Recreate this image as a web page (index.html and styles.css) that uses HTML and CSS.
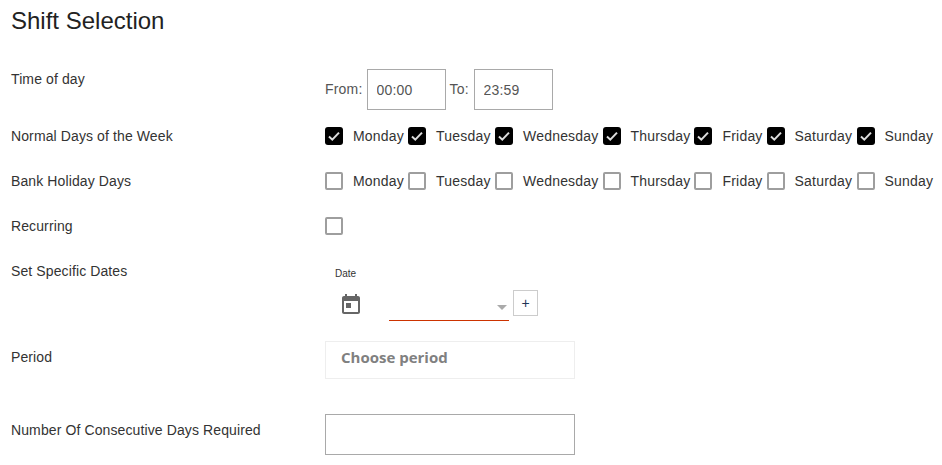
FILE: index.html
```html
<!DOCTYPE html>
<html lang="en">
<head>
    <meta charset="UTF-8">
    <title>Shift Selection</title>
    <link rel="stylesheet" href="styles.css">
</head>
<body>
    <div class="container">
        <h1>Shift Selection</h1>

        <div class="row timeRow">
            <div class="rowLabel">Time of day</div>
            <div class="rowControl">
                <span class="timeLabel">From:</span>
                <input class="textInput timeInput" type="text" value="00:00">
                <span class="timeLabel toLabel">To:</span>
                <input class="textInput timeInput" type="text" value="23:59">
            </div>
        </div>

        <div class="row dayRow">
            <div class="rowLabel">Normal Days of the Week</div>
            <div class="rowControl">
                <label class="day"><span class="box checked"><svg viewBox="0 0 18 18"><path d="M4 9.5l3.3 3.2L14 5.6"/></svg></span><span class="dayName">Monday</span></label>
                <label class="day"><span class="box checked"><svg viewBox="0 0 18 18"><path d="M4 9.5l3.3 3.2L14 5.6"/></svg></span><span class="dayName">Tuesday</span></label>
                <label class="day"><span class="box checked"><svg viewBox="0 0 18 18"><path d="M4 9.5l3.3 3.2L14 5.6"/></svg></span><span class="dayName">Wednesday</span></label>
                <label class="day"><span class="box checked"><svg viewBox="0 0 18 18"><path d="M4 9.5l3.3 3.2L14 5.6"/></svg></span><span class="dayName">Thursday</span></label>
                <label class="day"><span class="box checked"><svg viewBox="0 0 18 18"><path d="M4 9.5l3.3 3.2L14 5.6"/></svg></span><span class="dayName">Friday</span></label>
                <label class="day"><span class="box checked"><svg viewBox="0 0 18 18"><path d="M4 9.5l3.3 3.2L14 5.6"/></svg></span><span class="dayName">Saturday</span></label>
                <label class="day"><span class="box checked"><svg viewBox="0 0 18 18"><path d="M4 9.5l3.3 3.2L14 5.6"/></svg></span><span class="dayName">Sunday</span></label>
            </div>
        </div>

        <div class="row dayRow">
            <div class="rowLabel">Bank Holiday Days</div>
            <div class="rowControl">
                <label class="day"><span class="box"></span><span class="dayName">Monday</span></label>
                <label class="day"><span class="box"></span><span class="dayName">Tuesday</span></label>
                <label class="day"><span class="box"></span><span class="dayName">Wednesday</span></label>
                <label class="day"><span class="box"></span><span class="dayName">Thursday</span></label>
                <label class="day"><span class="box"></span><span class="dayName">Friday</span></label>
                <label class="day"><span class="box"></span><span class="dayName">Saturday</span></label>
                <label class="day"><span class="box"></span><span class="dayName">Sunday</span></label>
            </div>
        </div>

        <div class="row dayRow">
            <div class="rowLabel">Recurring</div>
            <div class="rowControl">
                <label class="day"><span class="box"></span></label>
            </div>
        </div>

        <div class="row dateRow">
            <div class="rowLabel">Set Specific Dates</div>
            <div class="datePicker">
                <div class="dateLabel">Date</div>
                <div class="dateControls">
                    <svg class="calendar" viewBox="0 0 24 24"><path d="M19 3h-1V1h-2v2H8V1H6v2H5c-1.1 0-2 .9-2 2v14c0 1.1.9 2 2 2h14c1.1 0 2-.9 2-2V5c0-1.100-.9-2-2-2zm0 16H5V8h14v11zM7 10h5v5H7z"/></svg>
                    <div class="dateSelect"><span class="arrow"></span></div>
                    <button class="addButton">+</button>
                </div>
            </div>
        </div>

        <div class="row periodRow">
            <div class="rowLabel">Period</div>
            <div class="periodBox">Choose period</div>
        </div>

        <div class="row numberRow">
            <div class="rowLabel">Number Of Consecutive Days Required</div>
            <input class="textInput numberInput" type="text">
        </div>
    </div>
</body>
</html>
```

FILE: styles.css
```css
body {
    font-family: "Liberation Sans", Arial, sans-serif;
    font-size: 14px;
    letter-spacing: 0.2px;
    color: #333;
    margin: 0;
    background-color: #fff;
}
.container {
    padding: 0 0 0 11px;
}
h1 {
    font-size: 24px;
    font-weight: 400;
    line-height: 26px;
    letter-spacing: 0;
    color: #222;
    margin: 0;
    padding-top: 8px;
    height: 61px;
}
.row {
    display: grid;
    grid-template-columns: 314px 1fr;
}
.rowLabel {
    line-height: 20px;
    letter-spacing: 0.11px;
}
.rowControl {
    display: flex;
    align-items: flex-start;
}
.timeRow {
    height: 58px;
}
.timeLabel {
    line-height: 41px;
    color: #555;
}
.toLabel {
    min-width: 20px;
}
.textInput {
    font-family: inherit;
    font-size: 14px;
    letter-spacing: inherit;
    color: #555;
    border: 1px solid #a9a9a9;
    background-color: #fff;
    box-sizing: border-box;
    outline: none;
    margin: 0;
}
.timeInput {
    width: 79px;
    height: 41px;
    padding: 0 9px;
    margin-left: 4px;
    margin-right: 4px;
}
.dayRow {
    height: 45px;
}
.dayRow .rowLabel {
    line-height: 18px;
}
.day {
    display: flex;
    align-items: center;
    height: 18px;
    margin-right: 4px;
}
.day:nth-child(2) .dayName {
    min-width: 55px;
}
.day:nth-child(6) .dayName {
    min-width: 58px;
}
.box {
    display: block;
    width: 18px;
    height: 18px;
    box-sizing: border-box;
    border: 2px solid #9e9e9e;
    border-radius: 2px;
}
.box.checked {
    border: none;
    background-color: #000;
    border-radius: 3px;
}
.box svg {
    display: block;
    width: 18px;
    height: 18px;
    fill: none;
    stroke: #ddd;
    stroke-width: 2;
}
.dayName {
    margin-left: 10px;
    line-height: 18px;
}
.dateRow {
    height: 79px;
}
.dateRow .rowLabel {
    line-height: 18px;
}
.datePicker {
    display: flex;
    flex-direction: column;
}
.dateLabel {
    font-size: 10px;
    line-height: 12px;
    letter-spacing: 0;
    margin: 6px 0 0 10px;
}
.dateControls {
    display: flex;
    align-items: flex-start;
    margin-top: 10px;
}
.calendar {
    display: block;
    width: 24px;
    height: 24px;
    fill: #666;
    margin: 3px 0 0 14px;
}
.dateSelect {
    position: relative;
    width: 120px;
    height: 30px;
    margin: 0 4px 0 26px;
    border-bottom: 1px solid #cc3300;
}
.arrow {
    position: absolute;
    right: 2px;
    top: 15px;
    border-left: 5.500px solid transparent;
    border-right: 5.500px solid transparent;
    border-top: 5.500px solid #aaa;
}
.addButton {
    width: 25px;
    height: 26px;
    padding: 0;
    margin: 0;
    border: 1px solid #ccc;
    background-color: #fff;
    color: #1d3557;
    font-family: inherit;
    font-size: 14px;
    line-height: 22px;
}
.periodRow {
    height: 73px;
    align-items: start;
}
.periodRow .rowLabel {
    margin-top: 6px;
}
.periodBox {
    width: 250px;
    height: 38px;
    box-sizing: border-box;
    border: 1px solid #eee;
    padding-left: 15px;
    font-family: "Open Sans", sans-serif;
    font-weight: 700;
    font-size: 15px;
    letter-spacing: 0;
    line-height: 31px;
    color: #808080;
}
.numberRow {
    align-items: start;
    height: 41px;
}
.numberRow .rowLabel {
    margin-top: 6px;
}
.numberInput {
    width: 250px;
    height: 41px;
}
```
